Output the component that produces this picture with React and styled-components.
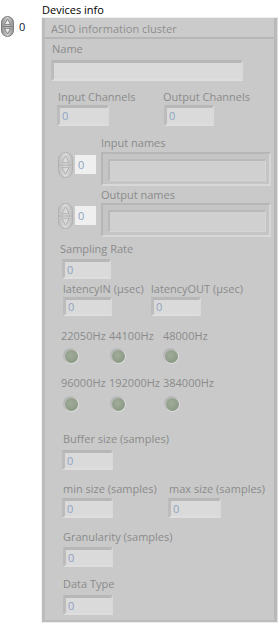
import React, { useId } from "react";
import styled, { createGlobalStyle } from "styled-components";

const Global = createGlobalStyle`
  html, body { margin: 0; padding: 0; background: #ffffff; }
  body { font-family: "Open Sans", "Liberation Sans", Arial, sans-serif; font-size: 11px; }
`;

const Page = styled.div`
  width: 279px;
  height: 626px;
  padding-top: 3px;
  box-sizing: border-box;
  overflow: hidden;
`;

const TopLabel = styled.div`
  margin-left: 42px;
  height: 13px;
  line-height: 13px;
  color: #000000;
`;

const MainRow = styled.div`
  display: flex;
  align-items: flex-start;
`;

const IndexCtl = styled.div`
  display: flex;
  align-items: flex-start;
  margin-left: 1px;
`;

const SpinSvg = styled.svg`
  display: block;
  flex: none;
  width: ${(p) => p.$w}px;
  height: ${(p) => p.$h}px;
  margin-top: ${(p) => p.$mt || 0}px;
`;

const IndexBox = styled.div`
  width: ${(p) => p.$w}px;
  height: ${(p) => p.$h}px;
  margin-top: ${(p) => p.$mt}px;
  margin-left: ${(p) => p.$ml || 0}px;
  box-sizing: border-box;
  background: ${(p) => (p.$dim ? "#efefef" : "#ffffff")};
  color: ${(p) => (p.$dim ? "#8ea3c2" : "#101830")};
  padding-left: ${(p) => (p.$dim ? 3 : 5)}px;
  padding-top: ${(p) => p.$pt || 0}px;
  line-height: ${(p) => p.$h - (p.$pt || 0)}px;
  flex: none;
`;

const Frame = styled.div`
  margin-left: 3px;
  margin-top: 1px;
  width: 237px;
  height: 606px;
  box-sizing: border-box;
  border: 1px solid;
  border-color: #eeeeee #e0e0e0 #ececec #f3f3f3;
  display: flex;
`;

const Cluster = styled.div`
  flex: 1;
  background: #c9c9c9;
  border-left: 3px solid #bcbcbc;
  border-right: 3px solid #b9b9b9;
  border-bottom: 2px solid #bdbdbd;
  display: flex;
  flex-direction: column;
`;

const TitleBar = styled.div`
  height: 21px;
  box-sizing: border-box;
  padding: 4px 0 0 6px;
  border-bottom: 2px solid #b6b6b6;
  background: #cbcbcb;
  color: #8e8e8e;
  line-height: 13px;
  white-space: nowrap;
`;

const Body = styled.div`
  display: flex;
  flex-direction: column;
  align-items: flex-start;
`;

const Label = styled.div`
  margin-left: ${(p) => p.$x || 0}px;
  margin-top: ${(p) => p.$mt || 0}px;
  padding-left: ${(p) => p.$pl || 0}px;
  height: 13px;
  line-height: 13px;
  color: #8b8b8b;
  white-space: nowrap;
`;

const NumBox = styled.div`
  width: ${(p) => p.$w || 51}px;
  height: ${(p) => p.$h || 20}px;
  margin-left: ${(p) => p.$x || 0}px;
  margin-top: ${(p) => p.$mt || 0}px;
  box-sizing: border-box;
  border-style: solid;
  border-width: 3px 2px 2px 3px;
  border-color: #b7b7b7 #d9d9d9 #dedede #bcbcbc;
  background: #dadada;
  color: #8ea3c2;
  padding-left: 2px;
  line-height: ${(p) => (p.$h || 20) - 5}px;
`;

const Pair = styled.div`
  display: grid;
  grid-template-columns: ${(p) => p.$col}px auto;
  row-gap: ${(p) => p.$gap}px;
  margin-left: ${(p) => p.$x}px;
  margin-top: ${(p) => p.$mt}px;
  justify-items: start;
`;

const HzGrid = styled.div`
  display: grid;
  grid-template-columns: 48px 54px auto;
  row-gap: ${(p) => p.$gap}px;
  margin-left: ${(p) => p.$x}px;
  margin-top: ${(p) => p.$mt}px;
  justify-items: start;
`;

const Led = styled.div`
  width: 16px;
  height: 16px;
  margin-left: ${(p) => p.$x}px;
  border-radius: 50%;
  background: linear-gradient(135deg, #a9a9a9 0%, #c4c4c4 45%, #f2f2f2 100%);
  display: flex;
  align-items: center;
  justify-content: center;
  &::after {
    content: "";
    width: 13px;
    height: 13px;
    border-radius: 50%;
    background: radial-gradient(circle at 42% 40%, #a1ad9a 0%, #919e8a 55%, #7f8c78 100%);
  }
`;

const ArrayRow = styled.div`
  display: flex;
  align-items: flex-start;
  margin-left: ${(p) => p.$x}px;
  margin-top: ${(p) => p.$mt}px;
`;

const ArrFrame = styled.div`
  width: 170px;
  height: 34px;
  margin-left: 5px;
  box-sizing: border-box;
  border-style: solid;
  border-width: 2px;
  border-color: #b6b6b6 #d6d6d6 #d8d8d8 #b6b6b6;
  background: #c5c5c5;
  padding: 5px 3px 3px 5px;
  display: flex;
`;

const ElemField = styled.div`
  flex: 1;
  border-style: solid;
  border-width: 2px 1px 1px 2px;
  border-color: #b9b9b9 #d5d5d5 #d5d5d5 #b9b9b9;
  background: #d0d0d0;
`;

function Spinner({ w, h, dim, mt }) {
  const id = "sp" + useId().replace(/[^a-zA-Z0-9_-]/g, "");
  const cx = w / 2;
  const edge = dim ? "#bcbcbc" : "#8e8e8e";
  const mid = dim ? "#dcdcdc" : "#d2d2d2";
  const stroke = dim ? "#b0b0b0" : "#7c7c7c";
  const tri = dim ? "#a9a9a9" : "#6e6e6e";
  const triFill = dim ? "#dadada" : "#ececec";
  const t = w * 0.24;
  return (
    <SpinSvg $w={w} $h={h} viewBox={`0 0 ${w} ${h}`} $mt={mt}>
      <defs>
        <linearGradient id={id} x1="0" x2="1" y1="0" y2="0">
          <stop offset="0" stopColor={edge} />
          <stop offset="0.5" stopColor={mid} />
          <stop offset="1" stopColor={edge} />
        </linearGradient>
      </defs>
      <rect
        x="0.5"
        y="0.5"
        width={w - 1}
        height={h - 1}
        rx={(w - 1) / 2}
        fill={`url(#${id})`}
        stroke={stroke}
      />
      <line x1="1.5" x2={w - 1.5} y1={h / 2} y2={h / 2} stroke={stroke} />
      <polygon
        points={`${cx},${h * 0.14} ${cx - t},${h * 0.41} ${cx + t},${h * 0.41}`}
        fill={triFill}
        stroke={tri}
        strokeWidth="0.8"
      />
      <polygon
        points={`${cx},${h * 0.86} ${cx - t},${h * 0.59} ${cx + t},${h * 0.59}`}
        fill={triFill}
        stroke={tri}
        strokeWidth="0.8"
      />
    </SpinSvg>
  );
}

function NamesArray({ mt }) {
  return (
    <ArrayRow $x={13} $mt={mt}>
      <Spinner w={15} h={26} dim mt={0} />
      <IndexBox $w={21} $h={19} $mt={3} $ml={2} $pt={1} $dim>
        0
      </IndexBox>
      <ArrFrame>
        <ElemField />
      </ArrFrame>
    </ArrayRow>
  );
}

export default function App() {
  return (
    <>
      <Global />
      <Page>
        <TopLabel>Devices info</TopLabel>
        <MainRow>
          <IndexCtl>
            <Spinner w={13} h={21} mt={0} />
            <IndexBox $w={24} $h={17} $mt={1} $pt={3}>
              0
            </IndexBox>
          </IndexCtl>
          <Frame>
            <Cluster>
              <TitleBar>ASIO information cluster</TitleBar>
              <Body>
                <Label $x={7} $mt={3}>Name</Label>
                <NumBox $x={6} $mt={5} $w={192} $h={21} />

                <Pair $x={12} $mt={9} $col={106} $gap={2}>
                  <Label $pl={1}>Input Channels</Label>
                  <Label>Output Channels</Label>
                  <NumBox $w={52} $h={21}>0</NumBox>
                  <NumBox $w={50} $h={21} $x={1}>0</NumBox>
                </Pair>

                <Label $x={56} $mt={10}>Input names</Label>
                <NamesArray mt={3} />

                <Label $x={56} $mt={2}>Output names</Label>
                <NamesArray mt={2} />

                <Label $x={15} $mt={5}>Sampling Rate</Label>
                <NumBox $x={17} $mt={4} $w={49}>0</NumBox>

                <Pair $x={18} $mt={3} $col={88} $gap={2}>
                  <Label>latencyIN (µsec)</Label>
                  <Label>latencyOUT (µsec)</Label>
                  <NumBox $w={49} $h={19}>0</NumBox>
                  <NumBox $w={50} $h={19}>0</NumBox>
                </Pair>

                <HzGrid $x={16} $mt={13} $gap={6}>
                  <Label>22050Hz</Label>
                  <Label>44100Hz</Label>
                  <Label>48000Hz</Label>
                  <Led $x={2} />
                  <Led $x={1} />
                  <Led $x={0} />
                </HzGrid>

                <HzGrid $x={16} $mt={12} $gap={7}>
                  <Label>96000Hz</Label>
                  <Label>192000Hz</Label>
                  <Label>384000Hz</Label>
                  <Led $x={2} />
                  <Led $x={1} />
                  <Led $x={1} />
                </HzGrid>

                <Label $x={18} $mt={20}>Buffer size (samples)</Label>
                <NumBox $x={17} $mt={5}>0</NumBox>

                <Pair $x={17} $mt={12} $col={106} $gap={3}>
                  <Label $pl={1}>min size (samples)</Label>
                  <Label $pl={1}>max size (samples)</Label>
                  <NumBox>0</NumBox>
                  <NumBox $w={53}>0</NumBox>
                </Pair>

                <Label $x={18} $mt={12}>Granularity (samples)</Label>
                <NumBox $x={18} $mt={4} $w={50}>0</NumBox>

                <Label $x={18} $mt={10}>Data Type</Label>
                <NumBox $x={18} $mt={5} $w={50}>0</NumBox>
              </Body>
            </Cluster>
          </Frame>
        </MainRow>
      </Page>
    </>
  );
}
